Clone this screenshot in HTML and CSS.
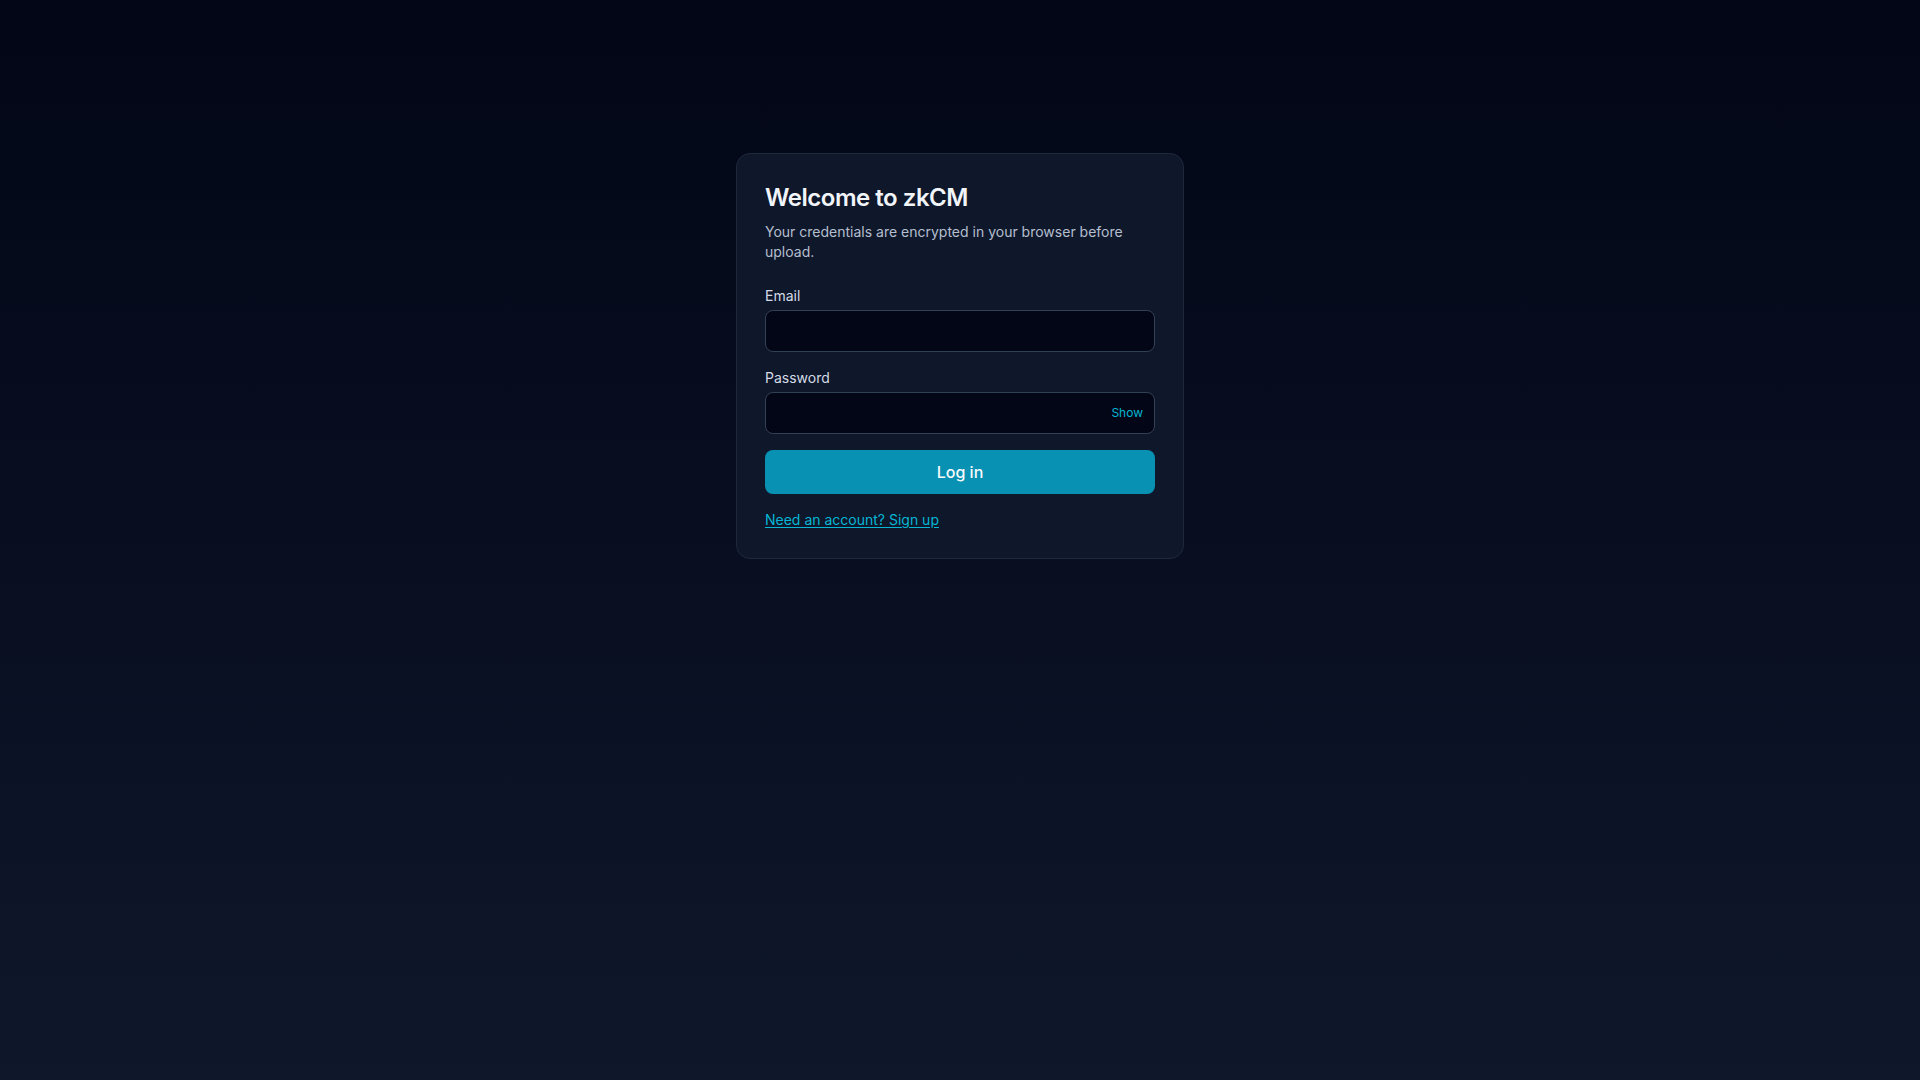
FILE: index.html
```html
<!DOCTYPE html>
<html lang="en">
<head>
<meta charset="utf-8">
<title>zkCM — Log in</title>
<link rel="stylesheet" href="styles.css">
</head>
<body>
<main class="page">
  <section class="card">
    <h1 class="title">Welcome to zkCM</h1>
    <p class="subtitle">Your credentials are encrypted in your browser before upload.</p>
    <form class="form">
      <div class="field">
        <label class="label" for="email">Email</label>
        <input class="input" id="email" type="email">
      </div>
      <div class="field">
        <label class="label" for="password">Password</label>
        <div class="input-wrap">
          <input class="input input-pw" id="password" type="password">
          <button type="button" class="show-btn">Show</button>
        </div>
      </div>
      <button type="button" class="submit">Log in</button>
      <a class="link" href="#">Need an account? Sign up</a>
    </form>
  </section>
</main>
</body>
</html>
```
FILE: styles.css
```css
* { box-sizing: border-box; }
html, body { margin: 0; padding: 0; }
body {
  min-height: 100vh;
  background: linear-gradient(to bottom, #020617, #0f172a);
  font-family: Inter, "Noto Sans", sans-serif;
  color: #e2e8f0;
}
.page {
  display: flex;
  justify-content: center;
  padding-top: 153px;
}
.card {
  width: 448px;
  background: #0f172a;
  border: 1px solid #1e293b;
  border-radius: 14px;
  padding: 28px;
}
.title {
  margin: 0;
  font-size: 24px;
  line-height: 32px;
  font-weight: 600;
  letter-spacing: -0.02em;
  color: #f1f5f9;
}
.subtitle {
  margin: 8px 0 0;
  font-size: 14px;
  line-height: 20px;
  color: #b4bfcf;
}
.form {
  margin-top: 24px;
  display: flex;
  flex-direction: column;
  gap: 16px;
}
.field {
  display: flex;
  flex-direction: column;
  gap: 4px;
}
.label {
  font-size: 14px;
  line-height: 20px;
  font-weight: 400;
  color: #d3dbe6;
}
.input {
  width: 100%;
  height: 42px;
  background: #020617;
  border: 1px solid #334155;
  border-radius: 8px;
  padding: 10px 12px;
  font: inherit;
  font-size: 14px;
  color: #e2e8f0;
  outline: none;
}
.input-wrap { position: relative; }
.input-pw { padding-right: 60px; }
.show-btn {
  position: absolute;
  right: 12px;
  top: 50%;
  transform: translateY(-50%);
  background: none;
  border: 0;
  padding: 0;
  font-family: inherit;
  font-size: 12px;
  line-height: 16px;
  color: #06b6d4;
  cursor: pointer;
}
.submit {
  height: 44px;
  border: 0;
  border-radius: 8px;
  background: #0891b2;
  color: #f8fafc;
  font-family: inherit;
  font-size: 16px;
  font-weight: 500;
  cursor: pointer;
}
.link {
  align-self: flex-start;
  font-size: 14px;
  line-height: 20px;
  color: #06b6d4;
  text-decoration: underline;
  text-underline-offset: 2px;
}
```
